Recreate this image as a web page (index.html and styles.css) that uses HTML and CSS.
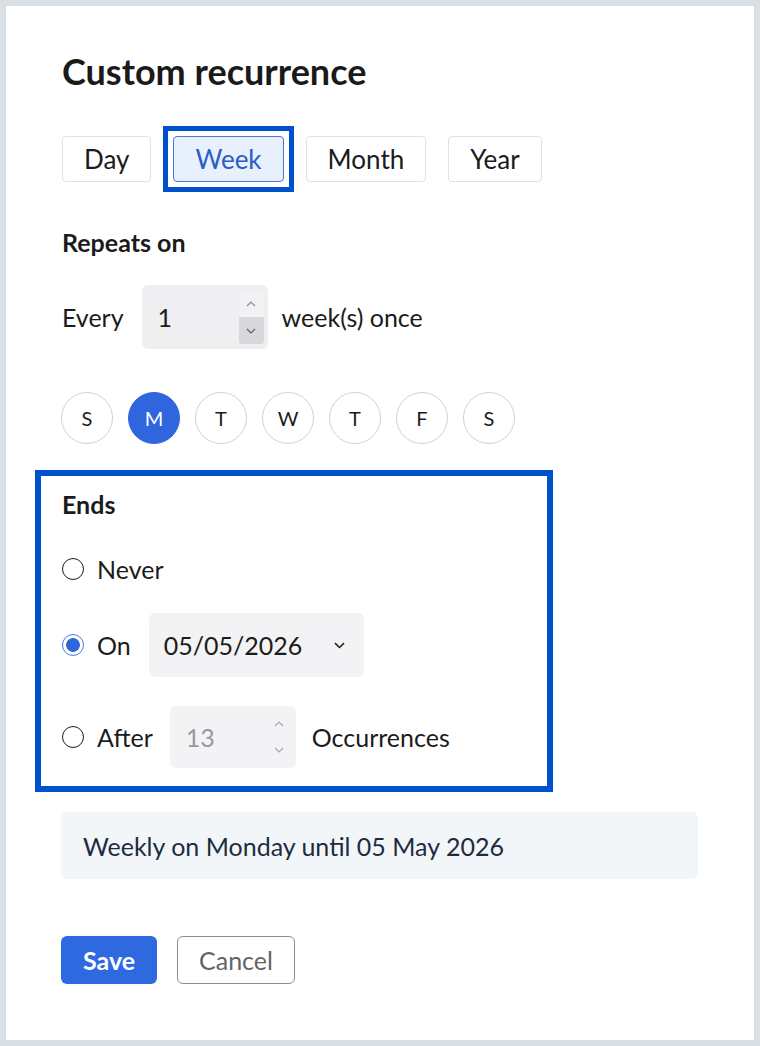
FILE: index.html
```html
<!DOCTYPE html>
<html lang="en">
<head>
<meta charset="utf-8">
<title>Custom recurrence</title>
<link rel="stylesheet" href="styles.css">
</head>
<body>
<div class="card">
  <h1 class="title">Custom recurrence</h1>

  <div class="tabs">
    <button class="tab">Day</button>
    <span class="focus-ring"><button class="tab tab-active">Week</button></span>
    <button class="tab">Month</button>
    <button class="tab">Year</button>
  </div>

  <div class="section-label repeats">Repeats on</div>

  <div class="every-row">
    <span class="every-label">Every</span>
    <div class="num-box">
      <span class="num-val">1</span>
      <div class="spin">
        <span class="spin-up"><svg width="10" height="6" viewBox="0 0 10 6"><path d="M1 5 L5 1 L9 5" fill="none" stroke="#8d8d92" stroke-width="1.2"/></svg></span>
        <span class="spin-down"><svg width="10" height="6" viewBox="0 0 10 6"><path d="M1 1 L5 5 L9 1" fill="none" stroke="#5d5d62" stroke-width="1.2"/></svg></span>
      </div>
    </div>
    <span class="every-suffix">week(s) once</span>
  </div>

  <div class="days">
    <span class="day">S</span>
    <span class="day day-on">M</span>
    <span class="day">T</span>
    <span class="day">W</span>
    <span class="day">T</span>
    <span class="day">F</span>
    <span class="day">S</span>
  </div>

  <div class="ends">
    <div class="section-label">Ends</div>
    <div class="end-row row-never">
      <span class="radio"></span>
      <span class="end-label">Never</span>
    </div>
    <div class="end-row row-on">
      <span class="radio radio-on"></span>
      <span class="end-label label-on">On</span>
      <div class="date-box">
        <span>05/05/2026</span>
        <svg class="chev" width="11" height="7" viewBox="0 0 11 7"><path d="M1 1.2 L5.5 5.5 L10 1.2" fill="none" stroke="#222" stroke-width="1.6"/></svg>
      </div>
    </div>
    <div class="end-row row-after">
      <span class="radio"></span>
      <span class="end-label label-after">After</span>
      <div class="num-box num-box-dis">
        <span class="num-val num-dis">13</span>
        <div class="spin spin-dis">
          <span class="spin-up"><svg width="10" height="6" viewBox="0 0 10 6"><path d="M1 5 L5 1 L9 5" fill="none" stroke="#a9a9ad" stroke-width="1.2"/></svg></span>
          <span class="spin-down"><svg width="10" height="6" viewBox="0 0 10 6"><path d="M1 1 L5 5 L9 1" fill="none" stroke="#a9a9ad" stroke-width="1.2"/></svg></span>
        </div>
      </div>
      <span class="end-suffix">Occurrences</span>
    </div>
  </div>

  <div class="summary">Weekly on Monday until 05 May 2026</div>

  <div class="actions">
    <button class="btn btn-save">Save</button>
    <button class="btn btn-cancel">Cancel</button>
  </div>
</div>
</body>
</html>
```

FILE: styles.css
```css
* { box-sizing: border-box; }
html, body { margin: 0; padding: 0; }
body {
  background: #d9dfe3;
  padding: 6px;
  font-family: Lato, "Open Sans", sans-serif;
  color: #1b1b1b;
  font-size: 25px;
}
.card {
  width: 748px;
  height: 1034px;
  background: #fff;
  padding: 43px 56px 0 56px;
}
.title {
  margin: 0;
  font-size: 36px;
  line-height: 44px;
  font-weight: 700;
  color: #1a1a1a;
}
.tabs {
  display: flex;
  align-items: center;
  gap: 22px;
  margin-top: 43px;
}
.tab {
  display: block;
  height: 46px;
  padding: 0 21px;
  border: 1px solid #e1e1e4;
  border-radius: 4px;
  background: #fff;
  font-family: inherit;
  font-size: 26px;
  color: #1b1b1b;
  line-height: 44px;
}
.focus-ring {
  display: block;
  border: 5px solid #0052cc;
  padding: 5px;
  margin: -10px;
}
.tab-active {
  background: #e8f0fd;
  border-color: #4a77d3;
  color: #2a5dc6;
}
.section-label {
  font-weight: 700;
  font-size: 25px;
  line-height: 30px;
}
.repeats { margin-top: 45px; }
.every-row {
  display: flex;
  align-items: center;
  height: 64px;
  margin-top: 28px;
}
.every-label { margin-right: 18px; }
.num-box {
  position: relative;
  width: 126px;
  height: 64px;
  background: #efeff2;
  border-radius: 6px;
  display: flex;
  align-items: center;
  padding-left: 16px;
}
.num-val { line-height: 30px; }
.spin {
  position: absolute;
  right: 4px;
  top: 5px;
  bottom: 5px;
  width: 25px;
  display: flex;
  flex-direction: column;
}
.spin span {
  flex: 1;
  display: flex;
  align-items: center;
  justify-content: center;
}
.spin-up { background: #f2f2f4; }
.spin-down { background: #d8d8dc; border-radius: 0 0 3px 3px; }
.spin-dis .spin-up, .spin-dis .spin-down { background: transparent; }
.every-suffix { margin-left: 14px; }

.days {
  display: flex;
  gap: 15px;
  margin-top: 43px;
  margin-left: -1px;
}
.day {
  width: 52px;
  height: 52px;
  border-radius: 50%;
  border: 1px solid #d2d2d4;
  display: flex;
  align-items: center;
  justify-content: center;
  font-size: 20px;
  color: #1b1b1b;
}
.day-on {
  background: #2f66de;
  border-color: #2f66de;
  color: #fff;
}

.ends {
  margin: 26px 0 0 -27px;
  width: 518px;
  height: 322px;
  border: 6px solid #0052cc;
  padding: 13px 0 0 21px;
}
.end-row {
  display: flex;
  align-items: center;
}
.row-never { height: 40px; margin-top: 30px; }
.row-on { height: 64px; margin-top: 24px; }
.row-after { height: 62px; margin-top: 29px; }
.radio {
  width: 22px;
  height: 22px;
  border-radius: 50%;
  border: 1.6px solid #1f1f1f;
  margin-right: 13px;
  flex: none;
}
.radio-on {
  border-color: #4a7be6;
  background: radial-gradient(circle, #2f66de 0 6.5px, #fff 7.2px);
}
.label-on { margin-right: 18px; }
.label-after { margin-right: 17px; }
.date-box {
  width: 215px;
  height: 64px;
  background: #f3f3f5;
  border-radius: 6px;
  display: flex;
  align-items: center;
  justify-content: space-between;
  padding: 0 19px 0 15px;
}
.num-box-dis {
  height: 62px;
  background: #f3f3f5;
}
.num-dis { color: #9a9a9e; }
.end-suffix { margin-left: 16px; }

.summary {
  margin-top: 20px;
  margin-left: -1px;
  width: 637px;
  height: 67px;
  background: #f3f6f9;
  border-radius: 6px;
  display: flex;
  align-items: center;
  padding-left: 22px;
  color: #1d2d3e;
}
.actions {
  display: flex;
  gap: 20px;
  margin-top: 57px;
  margin-left: -1px;
}
.btn {
  height: 48px;
  border-radius: 6px;
  font-family: inherit;
  font-size: 25px;
  padding: 0;
}
.btn-save {
  width: 96px;
  background: #2f69e0;
  border: none;
  color: #fff;
  font-weight: 700;
}
.btn-cancel {
  width: 118px;
  background: #fff;
  border: 1px solid #8c8c8c;
  color: #646464;
}
```
